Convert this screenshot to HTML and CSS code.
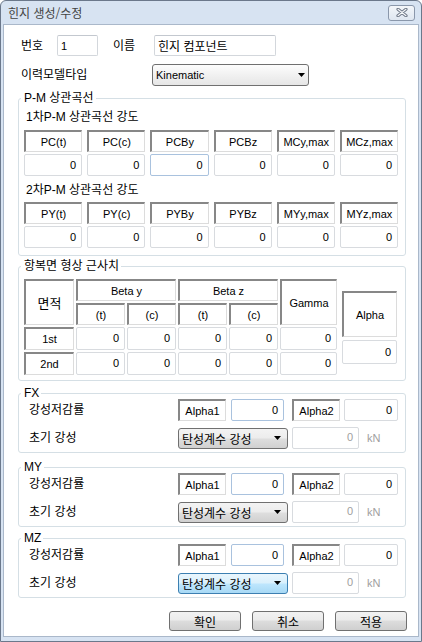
FILE: index.html
```html
<!DOCTYPE html>
<html lang="ko">
<head>
<meta charset="utf-8">
<title>힌지 생성/수정</title>
<link rel="stylesheet" href="styles.css">
</head>
<body>
<div class="window">
  <div class="titlebar">
    <span class="title">힌지 생성/수정</span>
    <div class="close">
      <svg width="12" height="9" viewBox="0 0 12 9"><path d="M2 1.3L10 7.7M10 1.3L2 7.7" stroke="#6f7888" stroke-width="3.2" stroke-linecap="round"/><path d="M2 1.3L10 7.7M10 1.3L2 7.7" stroke="#f7f9fb" stroke-width="1.1" stroke-linecap="round"/></svg>
    </div>
  </div>
  <div class="client">
    <div class="row row-top">
      <span class="lbl w36">번호</span>
      <div class="edit w41">1</div>
      <span class="lbl lbl-name">이름</span>
      <div class="edit w122">힌지 컴포넌트</div>
    </div>
    <div class="row row-type">
      <span class="lbl w131">이력모델타입</span>
      <div class="combo combo-type"><span class="latin">Kinematic</span><svg class="arrow" viewBox="0 0 7 4"><path d="M0 0H7L3.5 4Z" fill="#000"/></svg></div>
    </div>

    <fieldset class="grp grp-pm">
      <legend>P-M 상관곡선</legend>
      <div class="sub">1차P-M 상관곡선 강도</div>
      <div class="cells cells1">
        <div class="hd">PC(t)</div>
        <div class="hd">PC(c)</div>
        <div class="hd">PCBy</div>
        <div class="hd">PCBz</div>
        <div class="hd">MCy,max</div>
        <div class="hd">MCz,max</div>
        <div class="val">0</div>
        <div class="val">0</div>
        <div class="val hot">0</div>
        <div class="val">0</div>
        <div class="val">0</div>
        <div class="val">0</div>
      </div>
      <div class="sub sub2">2차P-M 상관곡선 강도</div>
      <div class="cells cells2">
        <div class="hd">PY(t)</div>
        <div class="hd">PY(c)</div>
        <div class="hd">PYBy</div>
        <div class="hd">PYBz</div>
        <div class="hd">MYy,max</div>
        <div class="hd">MYz,max</div>
        <div class="val">0</div>
        <div class="val">0</div>
        <div class="val">0</div>
        <div class="val">0</div>
        <div class="val">0</div>
        <div class="val">0</div>
      </div>
    </fieldset>

    <fieldset class="grp grp-yield">
      <legend>항복면 형상 근사치</legend>
      <div class="ytable">
        <div class="ygrid">
          <div class="hd span-r2 ko13">면적</div>
          <div class="hd span-c2">Beta y</div>
          <div class="hd span-c2">Beta z</div>
          <div class="hd span-r2">Gamma</div>
          <div class="hd">(t)</div>
          <div class="hd">(c)</div>
          <div class="hd">(t)</div>
          <div class="hd">(c)</div>
          <div class="hd">1st</div>
          <div class="val yv">0</div>
          <div class="val yv">0</div>
          <div class="val yv">0</div>
          <div class="val yv">0</div>
          <div class="val yv">0</div>
          <div class="hd">2nd</div>
          <div class="val yv">0</div>
          <div class="val yv">0</div>
          <div class="val yv">0</div>
          <div class="val yv">0</div>
          <div class="val yv">0</div>
        </div>
        <div class="alpha-col">
          <div class="hd alpha-hd">Alpha</div>
          <div class="val alpha-val">0</div>
        </div>
      </div>
    </fieldset>

    <fieldset class="grp grp-f grp-fx">
      <legend>FX</legend>
      <div class="frow">
        <span class="lbl flbl">강성저감률</span>
        <div class="hd ahd">Alpha1</div>
        <div class="val hot v1">0</div>
        <div class="hd ahd a2">Alpha2</div>
        <div class="val v2">0</div>
      </div>
      <div class="frow">
        <span class="lbl flbl">초기 강성</span>
        <div class="combo ccombo"><span>탄성계수 강성</span><svg class="arrow" viewBox="0 0 7 4"><path d="M0 0H7L3.5 4Z" fill="#000"/></svg></div>
        <div class="val dis">0</div>
        <span class="unit">kN</span>
      </div>
    </fieldset>

    <fieldset class="grp grp-f grp-my">
      <legend>MY</legend>
      <div class="frow">
        <span class="lbl flbl">강성저감률</span>
        <div class="hd ahd">Alpha1</div>
        <div class="val hot v1">0</div>
        <div class="hd ahd a2">Alpha2</div>
        <div class="val v2">0</div>
      </div>
      <div class="frow">
        <span class="lbl flbl">초기 강성</span>
        <div class="combo ccombo"><span>탄성계수 강성</span><svg class="arrow" viewBox="0 0 7 4"><path d="M0 0H7L3.5 4Z" fill="#000"/></svg></div>
        <div class="val dis">0</div>
        <span class="unit">kN</span>
      </div>
    </fieldset>

    <fieldset class="grp grp-f grp-mz">
      <legend>MZ</legend>
      <div class="frow">
        <span class="lbl flbl">강성저감률</span>
        <div class="hd ahd">Alpha1</div>
        <div class="val hot v1">0</div>
        <div class="hd ahd a2">Alpha2</div>
        <div class="val v2">0</div>
      </div>
      <div class="frow">
        <span class="lbl flbl">초기 강성</span>
        <div class="combo ccombo blue"><span>탄성계수 강성</span><svg class="arrow" viewBox="0 0 7 4"><path d="M0 0H7L3.5 4Z" fill="#000"/></svg></div>
        <div class="val dis">0</div>
        <span class="unit">kN</span>
      </div>
    </fieldset>

    <div class="buttons">
      <div class="btn">확인</div>
      <div class="btn">취소</div>
      <div class="btn">적용</div>
    </div>
  </div>
</div>
</body>
</html>
```

FILE: styles.css
```css
* { box-sizing: border-box; }
html, body { margin: 0; padding: 0; }
body {
  width: 422px;
  height: 642px;
  font-family: "Liberation Sans", "Noto Sans CJK KR", sans-serif;
  font-size: 12px;
  color: #000;
  background: #fff;
}

.window {
  width: 422px;
  height: 642px;
  border: 1px solid #6b788b;
  border-radius: 6px 6px 0 0;
  background: #d7e3f2;
  display: flex;
  flex-direction: column;
  overflow: hidden;
}

.titlebar {
  height: 23px;
  flex: none;
  display: flex;
  align-items: center;
  justify-content: space-between;
  padding: 0 6px 0 7px;
}
.title {
  font-family: "Noto Sans CJK KR", sans-serif;
  font-size: 12px;
  line-height: 14px;
  color: #434343;
}
.close {
  width: 27px;
  height: 16px;
  border: 1px solid #8a97ab;
  border-radius: 3px;
  background: linear-gradient(#f3f6fa, #dfe7f1);
  display: flex;
  align-items: center;
  justify-content: center;
}

.client {
  margin: 0 2px;
  height: 613px;
  flex: none;
  border: 1px solid #aab8ca;
  background: #fff;
}

.row { display: flex; align-items: center; }
.lbl { flex: none; line-height: 16px; }
.w36 { width: 36px; }
.w131 { width: 131px; }
.row-top { margin-top: 10px; padding-left: 17px; height: 21px; }
.row-type { margin-top: 8px; padding-left: 17px; height: 22px; }
.lbl-name { width: 41px; margin-left: 15px; }

.edit {
  flex: none;
  height: 21px;
  border: 1px solid #d3d7dc;
  border-top-color: #c3c8cf;
  border-radius: 2px;
  padding-left: 3px;
  display: flex;
  align-items: center;
  font-size: 12px;
}
.w41 { width: 41px; font-size: 11px; }
.w122 { width: 122px; }

.combo {
  flex: none;
  display: flex;
  align-items: center;
  justify-content: space-between;
  border: 1px solid #707070;
  border-radius: 3px;
  background: linear-gradient(#f3f3f3 0%, #ececec 48%, #dedede 52%, #d0d0d0 100%);
}
.combo-type {
  width: 157px;
  height: 22px;
  padding: 0 3px 0 3px;
  background: linear-gradient(#fdfdfd 0%, #f1f1f1 50%, #e6e6e6 100%);
}
.latin { font-size: 11px; }
.arrow { width: 7px; height: 4px; flex: none; }

/* group boxes */
.grp {
  margin: 0 12px 0 14px;
  border: 1px solid #d5dfe5;
  border-radius: 3px;
  min-width: 0;
}
.grp legend {
  font-size: 12px;
  line-height: 12px;
  padding: 0 2px 0 3px;
  margin-left: -3px;
}
.grp-pm { margin-top: 6px; padding: 5px 7px 7px 5px; }
.grp-yield { margin-top: 4px; padding: 7px 7px 5px 5px; }
.grp-f { padding: 0 6px 3px 10px; }
.grp-f legend { margin-left: -8px; }
.grp-fx { margin-top: 6px; }
.grp-my { margin-top: 8px; }
.grp-mz { margin-top: 5px; }

.sub { line-height: 16px; padding-left: 2px; }
.sub2 { margin-top: 6px; }

.cells {
  display: grid;
  grid-template-columns: repeat(6, 1fr);
  column-gap: 5px;
  row-gap: 2px;
  grid-auto-rows: 22px;
}
.cells1 { margin-top: 5px; }
.cells2 { margin-top: 4px; }

.hd {
  background: #fff;
  border-top: 2px solid #878787;
  border-left: 2px solid #878787;
  border-right: 1px solid #dcdcdc;
  border-bottom: 1px solid #dcdcdc;
  display: flex;
  align-items: center;
  justify-content: center;
  font-size: 11px;
  white-space: nowrap;
}
.val {
  background: #fff;
  border: 1px solid #d8dbdf;
  border-radius: 2px;
  display: flex;
  align-items: center;
  justify-content: flex-end;
  padding-right: 5px;
  font-size: 11px;
}
.val.hot { border-color: #a9c2de; }

/* yield table */
.ytable { display: flex; align-items: flex-start; }
.ygrid {
  display: grid;
  grid-template-columns: 50px 49px 49px 49px 49px 57px;
  grid-template-rows: 22px 22px 23px 23px;
  gap: 2px;
}
.span-r2 { grid-row: span 2; }
.span-c2 { grid-column: span 2; }
.ko13 { font-size: 13px; }
.yv { padding-bottom: 2px; }
.alpha-col {
  margin-left: 5px;
  margin-top: 12px;
  width: 55px;
  display: flex;
  flex-direction: column;
  gap: 3px;
}
.alpha-hd { height: 46px; }
.alpha-val { height: 24px; }

/* FX / MY / MZ */
.frow { display: flex; align-items: center; height: 22px; }
.frow + .frow { margin-top: 6px; }
.flbl { width: 149px; }
.ahd { width: 48px; height: 22px; flex: none; }
.a2 { margin-left: 8px; }
.v1 { width: 53px; height: 22px; margin-left: 5px; flex: none; }
.v2 { width: 54px; height: 22px; margin-left: 4px; flex: none; }
.ccombo {
  width: 110px;
  height: 21px;
  padding: 0 6px 0 3px;
  font-size: 12px;
}
.ccombo.blue {
  border-color: #3c7fb1;
  background: linear-gradient(#eaf6fd 0%, #d9f0fc 48%, #bee6fd 52%, #a7d9f5 100%);
}
.dis {
  width: 67px;
  height: 22px;
  margin-left: 4px;
  flex: none;
  color: #a0a0a0;
  padding-bottom: 3px;
}
.unit {
  margin-left: 8px;
  font-size: 11px;
  color: #a0a0a0;
}

.buttons {
  display: flex;
  justify-content: flex-end;
  gap: 11px;
  margin-top: 13px;
  padding-right: 11px;
}
.btn {
  width: 72px;
  height: 20px;
  border: 1px solid #707070;
  border-radius: 3px;
  background: linear-gradient(#f2f2f2 0%, #ebebeb 45%, #dddddd 50%, #cfcfcf 100%);
  display: flex;
  align-items: center;
  justify-content: center;
  font-size: 12px;
}
```
